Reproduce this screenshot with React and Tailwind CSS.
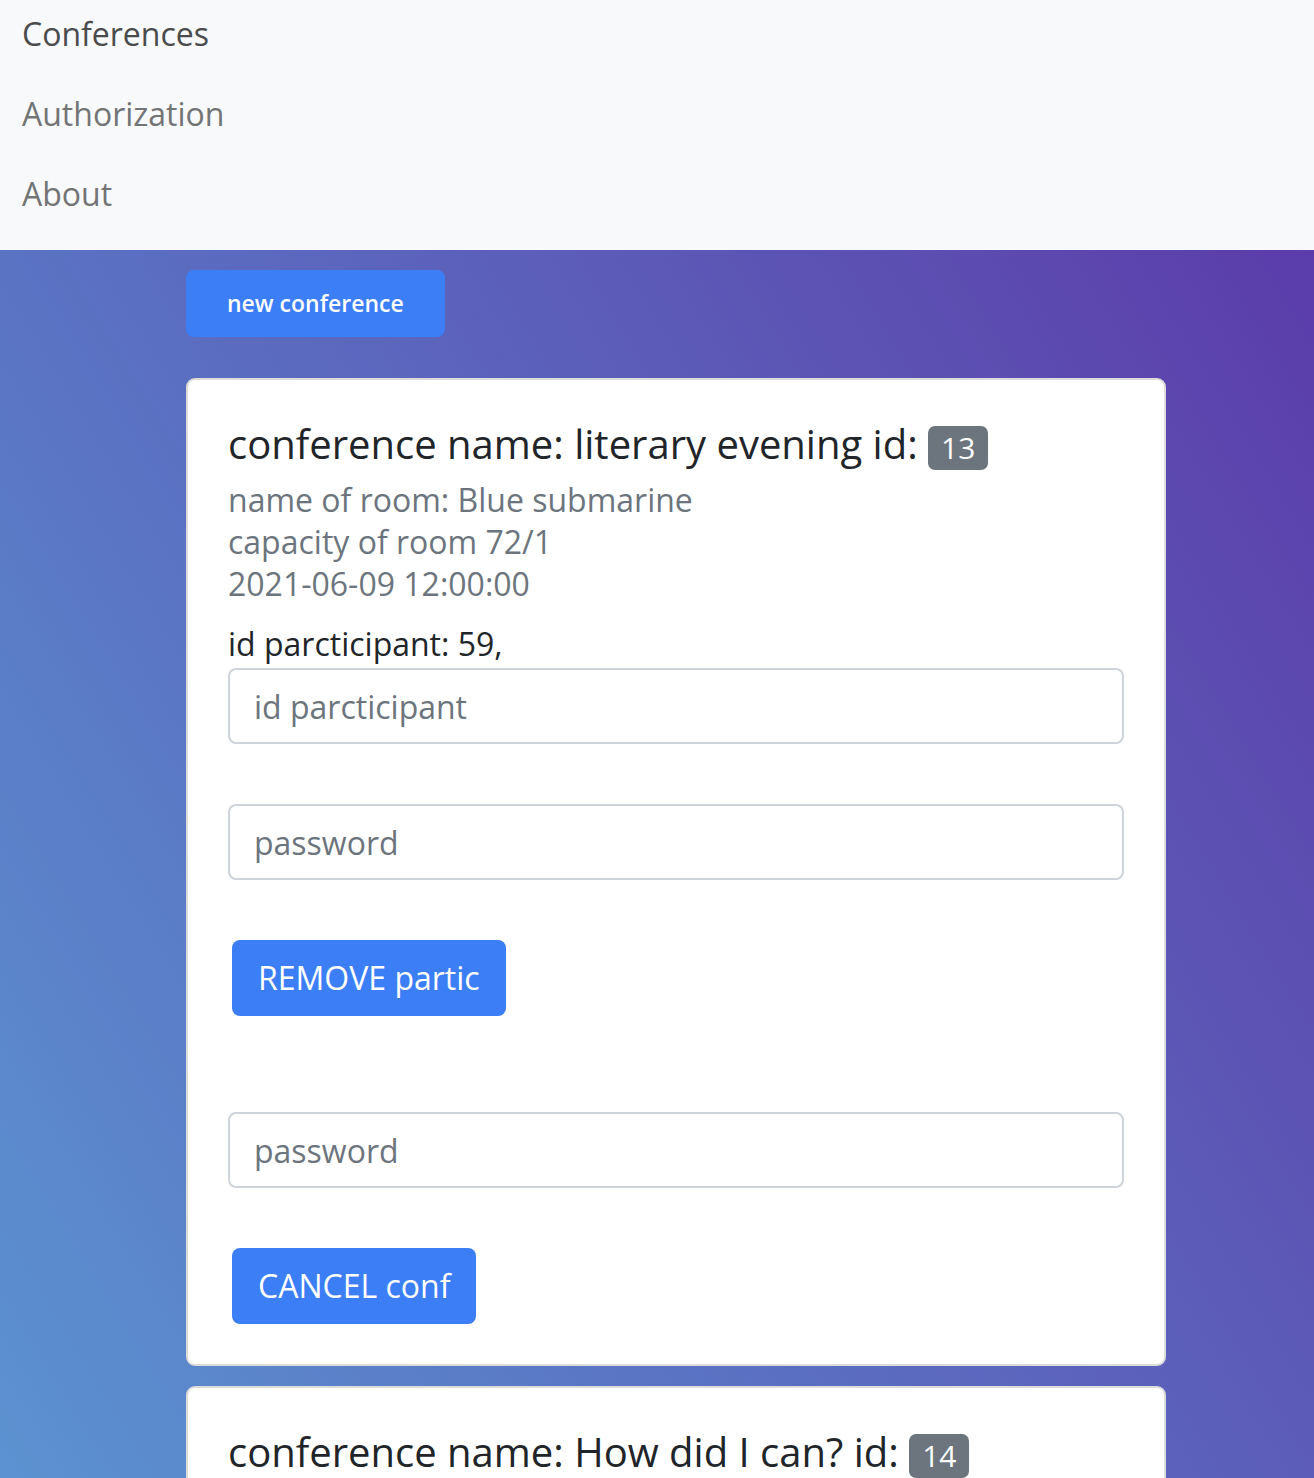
import React from 'react';

const conferences = [
  {
    id: 13,
    name: 'literary evening',
    room: 'Blue submarine',
    capacity: '72/1',
    date: '2021-06-09 12:00:00',
    participants: [59],
  },
  {
    id: 14,
    name: 'How did I can?',
    room: 'Red room',
    capacity: '40/0',
    date: '2021-06-10 15:00:00',
    participants: [],
  },
];

const font = { fontFamily: '"Open Sans", "Liberation Sans", sans-serif' };

function Field({ placeholder }) {
  return (
    <input
      type="text"
      placeholder={placeholder}
      className="block w-full h-[76px] px-[24px] py-[12px] text-[32px] leading-[48px] text-[#212529] bg-white border-2 border-[#ced4da] rounded-[8px] placeholder:text-[#6c757d] outline-none"
    />
  );
}

function Btn({ children }) {
  return (
    <button className="ml-[4px] h-[76px] px-[26px] text-[32px] leading-[48px] text-white bg-[#3b7ef6] rounded-[8px]">
      {children}
    </button>
  );
}

function ConferenceCard({ conf }) {
  return (
    <div className="bg-white border-2 border-[#dcdcdc] rounded-[9px] px-[40px] pt-[40px] pb-[40px]">
      <h5 className="text-[40px] leading-[48px] text-[#212529] mb-[9px]">
        conference name: {conf.name} id:{' '}
        <span className="inline-block align-baseline bg-[#6c757d] text-white text-[30px] leading-[30px] px-[13px] py-[7px] rounded-[7px]">
          {conf.id}
        </span>
      </h5>
      <div className="text-[32px] leading-[42px] text-[#6c757d]">
        <div>name of room: {conf.room}</div>
        <div>capacity of room {conf.capacity}</div>
        <div>{conf.date}</div>
      </div>
      <div className="mt-[15px] text-[32px] leading-[48px] text-[#212529]">
        id parcticipant: {conf.participants.map((p) => `${p},`).join(' ')}
      </div>
      <Field placeholder="id parcticipant" />
      <div className="mt-[60px]">
        <Field placeholder="password" />
      </div>
      <div className="mt-[60px]">
        <Btn>REMOVE partic</Btn>
      </div>
      <div className="mt-[96px]">
        <Field placeholder="password" />
      </div>
      <div className="mt-[60px]">
        <Btn>CANCEL conf</Btn>
      </div>
    </div>
  );
}

export default function App() {
  return (
    <div style={font} className="min-h-[1478px] flex flex-col">
      {/* Navigation */}
      <nav className="bg-[#f8f9fa] h-[250px] pt-[10px] px-[22px] flex flex-col gap-[32px] text-[32px] leading-[48px]">
        <a className="text-[#4a4b4c]">Conferences</a>
        <a className="text-[#737475]">Authorization</a>
        <a className="text-[#737475]">About</a>
      </nav>

      {/* Main */}
      <main className="flex-1 bg-gradient-to-tr from-[#5baadb] via-[#5a73c3] to-[#5b3caa] pt-[20px] pb-[40px]">
        <div className="ml-[186px] w-[980px]">
          <button className="h-[67px] px-[41px] text-[23px] font-semibold text-white bg-[#3b7ef6] rounded-[8px]">
            new conference
          </button>
          <div className="mt-[41px] flex flex-col gap-[20px]">
            {conferences.map((c) => (
              <ConferenceCard key={c.id} conf={c} />
            ))}
          </div>
        </div>
      </main>
    </div>
  );
}
